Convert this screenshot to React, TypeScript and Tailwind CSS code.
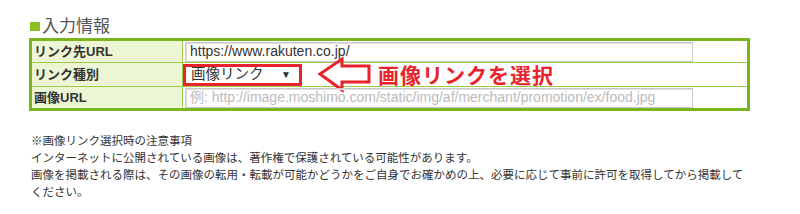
import React from "react";

const jp = { fontFamily: '"Liberation Sans", "Noto Sans CJK JP", sans-serif' };

function Arrow() {
  return (
    <svg width="54" height="36" viewBox="0 0 54 36" className="ml-[16px] shrink-0 overflow-visible">
      <polygon
        points="2,17 24,2 24,9 51,9 51,25 24,25 24,33"
        fill="none"
        stroke="#e8232b"
        strokeWidth="3"
        strokeLinejoin="miter"
      />
    </svg>
  );
}

export default function App() {
  return (
    <div className="w-[800px] h-[214px] bg-white overflow-hidden pl-[29px] pt-[15px] text-[#333]" style={jp}>
      <div className="flex items-center h-[22px] text-[17px] text-[#555] leading-none">
        <span className="inline-block w-[10px] h-[9px] bg-[#8cc11f] mr-[2px] ml-[1px]" />
        <span>入力情報</span>
      </div>
      <div className="mt-[1px] w-[721px] border-[3px] border-[#7cb41e]">
        <div className="flex h-[22px] border-b border-[#9ccc45]">
          <div className="w-[151px] shrink-0 bg-[#ecf6d4] border-r border-[#9ccc45] pl-[2px] flex items-center text-[13px] font-bold">
            リンク先URL
          </div>
          <div className="flex items-center pl-[2px]">
            <div className="w-[508px] h-[20px] border border-[#c8c8c8] shadow-[inset_1px_1px_0_#e0e0e0] flex items-center pl-[4px] text-[14px] text-[#333]" style={{ fontFamily: '"Liberation Sans", sans-serif' }}>
              https://www.rakuten.co.jp/
            </div>
          </div>
        </div>
        <div className="flex h-[24px] border-b border-[#9ccc45]">
          <div className="w-[151px] shrink-0 bg-[#ecf6d4] border-r border-[#9ccc45] pl-[2px] flex items-center text-[13px] font-bold">
            リンク種別
          </div>
          <div className="flex items-center">
            <div className="w-[119px] h-[22px] border-[3px] border-[#e8232b] flex items-center justify-between pl-[5px] pr-[8px] text-[14.5px]">
              <span>画像リンク</span>
              <span className="text-[10px] leading-none">▼</span>
            </div>
            <Arrow />
            <span className="ml-[6px] text-[21px] font-bold text-[#e8232b] tracking-[1px] leading-none" style={{ fontFamily: '"Noto Sans CJK JP", sans-serif' }}>
              画像リンクを選択
            </span>
          </div>
        </div>
        <div className="flex h-[21px]">
          <div className="w-[151px] shrink-0 bg-[#ecf6d4] border-r border-[#9ccc45] pl-[2px] flex items-center text-[13px] font-bold">
            画像URL
          </div>
          <div className="flex items-center pl-[2px]">
            <div className="w-[508px] h-[20px] border border-[#c8c8c8] shadow-[inset_1px_1px_0_#e0e0e0] flex items-center pl-[4px] text-[14px] text-[#bbbbbb] whitespace-nowrap overflow-hidden">
              例: http://image.moshimo.com/static/img/af/merchant/promotion/ex/food.jpg
            </div>
          </div>
        </div>
      </div>
      <div className="mt-[21px] pl-[2px] text-[11.5px] leading-[17px] text-[#333]" style={{ fontFamily: '"Noto Sans CJK JP", sans-serif' }}>
        <div>※画像リンク選択時の注意事項</div>
        <div>インターネットに公開されている画像は、著作権で保護されている可能性があります。</div>
        <div>画像を掲載される際は、その画像の転用・転載が可能かどうかをご自身でお確かめの上、必要に応じて事前に許可を取得してから掲載して</div>
        <div>ください。</div>
      </div>
    </div>
  );
}
